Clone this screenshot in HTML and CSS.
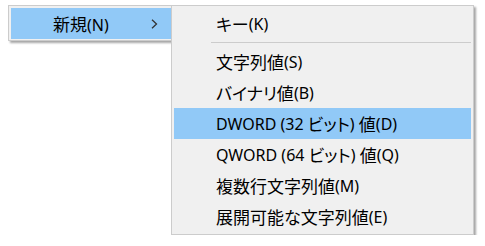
FILE: index.html
```html
<!DOCTYPE html>
<html lang="ja">
<head>
  <meta charset="UTF-8">
  <title>新規メニュー</title>
  <link rel="stylesheet" href="styles.css">
</head>
<body>
  <div class="menu-area">
    <ul class="menu parent">
      <li class="item active">
        <span class="label"><span class="jp">新規</span>(N)</span>
        <svg class="chevron" width="7" height="10" viewBox="0 0 7 10">
          <polyline points="1,0.8 5.5,5 1,9.2" fill="none" stroke="#333" stroke-width="1.3"/>
        </svg>
      </li>
    </ul>

    <ul class="menu submenu">
      <li class="item"><span class="jp">キー</span>(K)</li>
      <li class="sep"></li>
      <li class="item"><span class="jp">文字列値</span>(S)</li>
      <li class="item"><span class="jp">バイナリ値</span>(B)</li>
      <li class="item active">DWORD (32 <span class="jp">ビット</span>) <span class="jp">値</span>(D)</li>
      <li class="item">QWORD (64 <span class="jp">ビット</span>) <span class="jp">値</span>(Q)</li>
      <li class="item"><span class="jp">複数行文字列値</span>(M)</li>
      <li class="item"><span class="jp">展開可能な文字列値</span>(E)</li>
    </ul>
  </div>
</body>
</html>
```

FILE: styles.css
```css
body {
  margin: 0;
  background-color: #fff;
  font-family: "Noto Sans", "Noto Sans CJK JP", sans-serif;
  font-size: 16px;
  color: #000;
}
.menu-area {
  display: grid;
  grid-template-columns: 163px 20px 283px;
  align-items: start;
  padding: 5px 0 0 8px;
}
.menu {
  list-style: none;
  margin: 0;
  background-color: #f0f0f0;
  border: 1px solid #cccccc;
  box-shadow: 2px 2px 2px rgba(0, 0, 0, 0.35);
}
.parent {
  grid-column: 1 / 3;
  grid-row: 1;
  padding: 2px 2px 1px 2px;
}
.submenu {
  grid-column: 2 / 4;
  grid-row: 1;
  z-index: 1;
  padding: 2px;
}
.item {
  height: 31px;
  display: flex;
  align-items: center;
  padding-left: 42px;
  white-space: pre;
}
.item.active {
  background-color: #91c9f7;
}
.jp {
  font-family: "Noto Sans CJK JP", sans-serif;
  font-size: 17px;
  font-feature-settings: "palt";
}
.parent .item {
  padding-left: 42px;
}
.parent .label {
  flex: 1;
}
.chevron {
  margin-right: 30px;
}
.sep {
  height: 1px;
  background-color: #cccccc;
  margin: 3px 0 3px 37px;
}
```
